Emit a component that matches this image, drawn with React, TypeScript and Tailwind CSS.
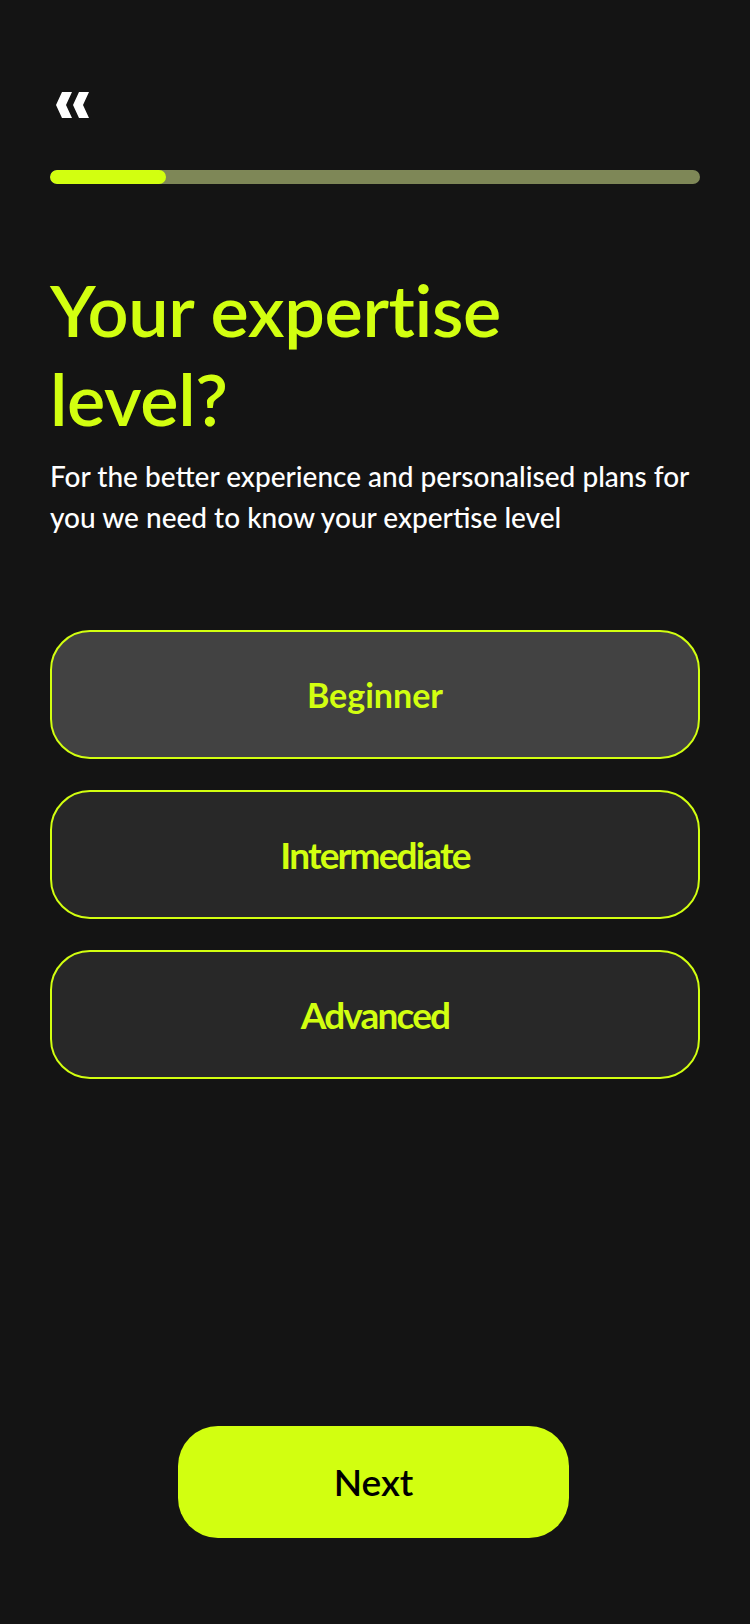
import { useState } from 'react'

const levels = ['Beginner', 'Intermediate', 'Advanced']

function BackIcon() {
  return (
    <svg width="34" height="26" viewBox="0 0 34 26" fill="#ffffff">
      <polygon points="6,0 16,0 10,13 16,26 6,26 0,13" />
      <polygon points="23,0 33,0 27,13 33,26 23,26 17,13" />
    </svg>
  )
}

export default function App() {
  const [picked, setPicked] = useState('Beginner')

  return (
    <div className="min-h-screen w-full bg-[#141414] flex flex-col px-[50px] pt-[92px] pb-[86px] font-['Lato',sans-serif]">
      {/* Back */}
      <button className="w-fit ml-[6px] h-[26px]">
        <BackIcon />
      </button>

      {/* Progress */}
      <div className="mt-[52px] h-[14px] w-full rounded-full bg-[#7e8757] overflow-hidden">
        <div className="h-full w-[116px] rounded-full bg-[#d2ff10]" />
      </div>

      {/* Heading */}
      <h1 className="mt-[81px] text-[72px] leading-[89px] font-semibold text-[#d2ff10] tracking-[-0.005em]">
        Your expertise
        <br />
        level?
      </h1>
      <p className="mt-[13px] -mr-[10px] text-[28px] leading-[41px] font-medium text-white">
        For the better experience and personalised plans for you we need to know your expertise level
      </p>

      {/* Options */}
      <div className="mt-[92px] flex flex-col gap-[31px]">
        {levels.map((lvl) => (
          <button
            key={lvl}
            onClick={() => setPicked(lvl)}
            className={`h-[129px] w-full rounded-[40px] border-2 border-[#d2ff10] flex items-center justify-center ${
              picked === lvl ? 'bg-[#424242]' : 'bg-[#282828]'
            }`}
          >
            <span
              className={
                lvl === 'Beginner'
                  ? 'text-[34px] font-bold text-[#d2ff10]'
                  : 'text-[37px] font-bold text-[#d2ff10] tracking-[-0.05em]'
              }
            >
              {lvl}
            </span>
          </button>
        ))}
      </div>

      {/* Next */}
      <div className="mt-auto flex justify-center">
        <button className="ml-[-3px] h-[112px] w-[391px] rounded-[40px] bg-[#d2ff10] text-[37px] font-semibold text-black">
          Next
        </button>
      </div>
    </div>
  )
}
